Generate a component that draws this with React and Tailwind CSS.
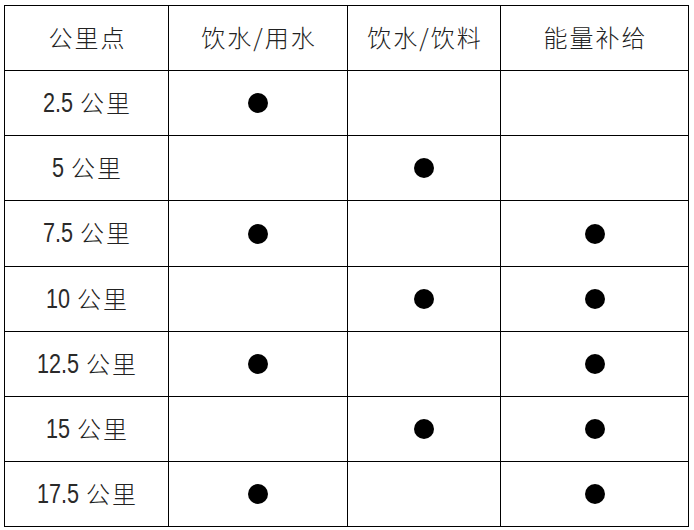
import React from "react";

const rows = [
  { km: "2.5", c: [true, false, false], h: "h-[65px]", m: "mr-[-7.5px]" },
  { km: "5", c: [false, true, false], h: "h-[65px]", m: "mr-[-3px]" },
  { km: "7.5", c: [true, false, true], h: "h-[66px]", m: "mr-[-7.5px]" },
  { km: "10", c: [false, true, true], h: "h-[65px]", m: "mr-[-6px]" },
  { km: "12.5", c: [true, false, true], h: "h-[65px]", m: "mr-[-10.5px]" },
  { km: "15", c: [false, true, true], h: "h-[65px]", m: "mr-[-6px]" },
  { km: "17.5", c: [true, false, true], h: "h-[65px]", m: "mr-[-10.5px]" },
];

const cjk = "font-['Noto_Sans_CJK_SC',sans-serif] font-light text-[24px] tracking-[2px] text-[#222]";
const num = "inline-block origin-left scale-x-[0.8] font-['Liberation_Sans',sans-serif] text-[27px] text-[#2a2a2a]";

function Cell({ children, h }) {
  return (
    <div className={`${h} border-r border-b border-black flex items-center justify-center`}>
      {children}
    </div>
  );
}

function Dot() {
  return <div className="w-[20px] h-[20px] rounded-full bg-black" />;
}

export default function App() {
  return (
    <div className="w-[694px] h-[530px] bg-white pt-[5px] pl-[4px]">
      <div className="w-[685px] border-l border-t border-black grid grid-cols-[164px_179px_153px_188px]">
        <Cell h="h-[65px]"><span className={`${cjk} mr-[-2px] mb-[2px]`}>公里点</span></Cell>
        <Cell h="h-[65px]"><span className={`${cjk} mr-[-2px] mb-[2px]`}>饮水/用水</span></Cell>
        <Cell h="h-[65px]"><span className={`${cjk} mr-[-2px] mb-[2px]`}>饮水/饮料</span></Cell>
        <Cell h="h-[65px]"><span className={`${cjk} mr-[-2px] mb-[2px]`}>能量补给</span></Cell>
        {rows.map((r) => (
          <React.Fragment key={r.km}>
            <Cell h={r.h}>
              <span className="flex items-baseline leading-none">
                <span className={`${num} ${r.m}`}>{r.km}</span>
                <span className={`${cjk} ml-[7px] mr-[-2px]`}>公里</span>
              </span>
            </Cell>
            {r.c.map((on, i) => (
              <Cell key={i} h={r.h}>{on ? <Dot /> : null}</Cell>
            ))}
          </React.Fragment>
        ))}
      </div>
    </div>
  );
}
